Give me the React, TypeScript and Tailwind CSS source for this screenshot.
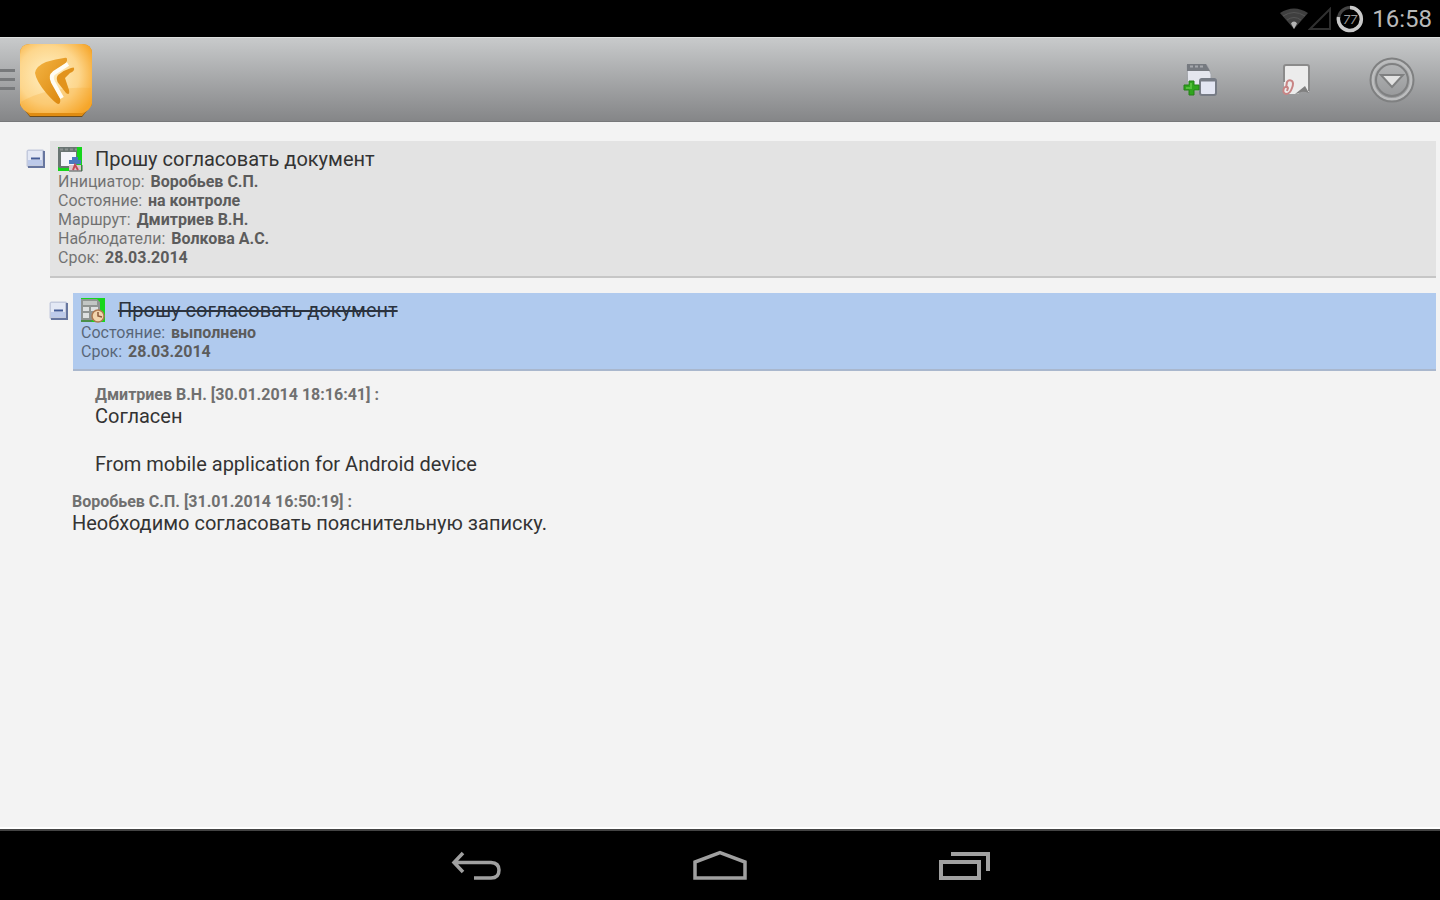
import type { ReactNode } from "react";

type Field = { label: string; value: string };

const taskFields: Field[] = [
  { label: "Инициатор", value: "Воробьев С.П." },
  { label: "Состояние", value: "на контроле" },
  { label: "Маршрут", value: "Дмитриев В.Н." },
  { label: "Наблюдатели", value: "Волкова А.С." },
  { label: "Срок", value: "28.03.2014" },
];

const subtaskFields: Field[] = [
  { label: "Состояние", value: "выполнено" },
  { label: "Срок", value: "28.03.2014" },
];

function StatusBar() {
  return (
    <div className="flex h-[37px] items-center justify-end bg-black pr-2">
      {/* Wifi */}
      <svg width="28" height="22" viewBox="0 0 28 22">
        <path d="M0 5 Q14 -4 28 5 L14 21 Z" fill="#3f3f3f" />
        <path d="M3 8 Q14 1 25 8M7 12 Q14 7 21 12" stroke="#555" strokeWidth="1" fill="none" />
        <path d="M14 13.5 Q16 13.5 17 15.5 L14 21 L11 15.5 Q12 13.5 14 13.5Z" fill="#b4b4b4" />
      </svg>
      {/* Cell signal */}
      <svg width="24" height="24" viewBox="0 0 24 24">
        <path d="M2 22 L22 2 V22 Z" fill="none" stroke="#303030" strokeWidth="2" />
      </svg>
      {/* Battery */}
      <svg className="ml-1" width="28" height="28" viewBox="0 0 28 28">
        <circle cx="14" cy="14" r="11.5" fill="none" stroke="#444" strokeWidth="3" />
        <path d="M14 2.5 A11.5 11.5 0 1 1 2.5 12" fill="none" stroke="#c9c9c9" strokeWidth="3.5" />
        <text x="14" y="19" textAnchor="middle" fontSize="13" fontStyle="italic" fill="#999">
          77
        </text>
      </svg>
      <span className="ml-2 text-2xl text-[#b9b9b9]">16:58</span>
    </div>
  );
}

function Logo() {
  return (
    <svg width="76" height="76" viewBox="0 0 76 76">
      <defs>
        <radialGradient id="tile" cx="0.4" cy="0.45" r="0.7">
          <stop offset="0" stopColor="#fff0c4" />
          <stop offset="0.6" stopColor="#fdd68c" />
          <stop offset="1" stopColor="#f6a62a" />
        </radialGradient>
        <linearGradient id="arrow" x1="0" y1="0" x2="1" y2="1">
          <stop offset="0" stopColor="#f4b545" />
          <stop offset="1" stopColor="#d98308" />
        </linearGradient>
      </defs>
      <path d="M2 62 L12 75 H64 L74 62 Z" fill="#6d4a18" />
      <path d="M12 2 H64 Q74 2 74 12 V63 L64 74 H12 L2 63 V12 Q2 2 12 2Z" fill="#e08c12" />
      <path d="M12 2 H64 Q74 2 74 12 V61 Q72 69 64 71 H12 Q4 69 2 61 V12 Q2 2 12 2Z" fill="url(#tile)" />
      <path d="M3 60 Q30 44 73 46 V62 Q72 70 63 71 H13 Q5 71 3 60Z" fill="#f9a92c" opacity="0.25" />
      <path
        d="M49 17 Q50 20 44 24 L34 31 Q31 34 34 40 L42 56 Q43 62 40 62 Q37 61 29 52 Q18 39 17 31 Q18 24 28 20 Q38 17 46 16 Q49 15 49 17Z"
        fill="url(#arrow)"
      />
      <path d="M50 22 L36 31 Q32 34 35 40 L44 56" fill="none" stroke="#fffdf5" strokeWidth="4" />
      <path
        d="M56 26 Q57 29 52 31 L47 36 L51 48 Q52 54 48 51 L41 42 Q37 37 40 33 Q46 28 53 26 Q56 25 56 26Z"
        fill="#e2931c"
      />
    </svg>
  );
}

function AddTaskIcon() {
  return (
    <svg width="36" height="36" viewBox="0 0 36 36">
      <path d="M5 3 H25 L29 12 V29 H6 Z" fill="#e4e6ee" stroke="#a2a5aa" strokeWidth="1" />
      <path d="M5 2 H24 L28 9 H5 Z" fill="#767a80" />
      <path d="M8 4.5 H23" stroke="#a5a8ad" strokeWidth="2" strokeDasharray="3 2" />
      <rect x="18" y="17" width="16" height="16" rx="2" fill="#e3e6f3" stroke="#777c86" strokeWidth="2" />
      <path d="M19 18 H33" stroke="#777c86" strokeWidth="3" />
      <path d="M7 19 H12 V23 H17 V28 H12 V33 H7 V28 H2 V23 H7 Z" fill="#2fa51d" stroke="#278018" strokeWidth="1" />
      <path d="M9 21 V26 H4" stroke="#55c03c" strokeWidth="2" fill="none" />
    </svg>
  );
}

function AttachmentIcon() {
  return (
    <svg width="36" height="36" viewBox="0 0 36 36">
      <path d="M6 4 Q6 3 7 3 H29 Q31 3 31 5 V30 L25 27 L20 32 H6 Z" fill="#ececec" />
      <path d="M6 20 V5 Q6 3 8 3 H29 Q31 3 31 5 V29" fill="none" stroke="#8b8b8b" strokeWidth="2" />
      <path d="M17 32 L27 24 L31 31 Q26 29 23 30 Q20 32 17 32Z" fill="#808080" />
      <path
        d="M8 26 L9 20 Q11 17 14 19 Q16 21 14 26 Q12 32 8 32 Q4 31 6 26 Q9 23 10 26 L9 29"
        fill="none"
        stroke="#c88484"
        strokeWidth="2"
      />
    </svg>
  );
}

function MenuIcon() {
  return (
    <svg width="46" height="46" viewBox="0 0 46 46" fill="none">
      <circle cx="23" cy="23" r="19.5" stroke="#bcbdbe" strokeWidth="3" />
      <circle cx="23" cy="23" r="21.5" stroke="#7f8081" strokeWidth="2" />
      <circle cx="23" cy="23" r="16" stroke="#7f8081" strokeWidth="2" />
      <path d="M12 18 H34 L23 30 Z" fill="#e2e2e2" stroke="#7f8081" strokeWidth="2" />
    </svg>
  );
}

function Toolbar() {
  return (
    <header className="flex h-[85px] items-center border-t border-b border-t-[#dcdede] border-b-[#77787a] bg-linear-to-b from-[#c8cacb] to-[#858688]">
      <button aria-label="Меню" className="flex h-12 w-[18px] flex-col justify-center gap-[6px]">
        <span className="h-[3px] w-[15px] bg-[#77797b]" />
        <span className="h-[3px] w-[15px] bg-[#77797b]" />
        <span className="h-[3px] w-[15px] bg-[#77797b]" />
      </button>
      <a href="#" aria-label="Главная">
        <Logo />
      </a>
      <div className="ml-auto flex items-center gap-12 pr-6">
        <button aria-label="Добавить" className="flex w-12 justify-center">
          <AddTaskIcon />
        </button>
        <button aria-label="Вложения" className="flex w-12 justify-center">
          <AttachmentIcon />
        </button>
        <button aria-label="Ещё" className="flex w-12 justify-center">
          <MenuIcon />
        </button>
      </div>
    </header>
  );
}

function Collapse() {
  return (
    <button aria-label="Свернуть" className="mt-2 shrink-0 self-start">
      <svg width="19" height="19" viewBox="0 0 19 19">
        <rect x="0.5" y="0.5" width="18" height="18" rx="2" fill="#c3cadd" />
        <path d="M2 18 H18 V2" fill="none" stroke="#67769f" strokeWidth="2" />
        <rect x="2" y="2" width="14" height="14" fill="#e3e8f5" />
        <rect x="2" y="11" width="14" height="5" fill="#bdcaea" />
        <path d="M5 9.5 H14" stroke="#455c96" strokeWidth="2" />
      </svg>
    </button>
  );
}

function ControlIcon() {
  return (
    <svg width="26" height="26" viewBox="0 0 26 26">
      <rect x="1" y="1" width="24" height="24" fill="#15d51b" />
      <path d="M1 3 Q1 1 3 1 H20 V22 H3 Q1 22 1 20Z" fill="#6a7573" />
      <path d="M3 3.5 H20" stroke="#8b9291" strokeWidth="2" strokeDasharray="3 2" />
      <rect x="4" y="6" width="15" height="14" fill="#f4f5fa" />
      <path d="M12 14 H15 V11 H21 V14 H24 V18 H12Z" fill="#4a79bd" />
      <path d="M12 25 V19 H24 V25Z" fill="#dcc6cb" />
      <path d="M16 24 L18 19 L21 24" fill="none" stroke="#c44b55" strokeWidth="2" />
      <path d="M12 25 H25 V19" fill="none" stroke="#4c5654" strokeWidth="1" />
    </svg>
  );
}

function DoneIcon() {
  return (
    <svg width="26" height="26" viewBox="0 0 26 26">
      <rect x="1" y="1" width="24" height="24" fill="#16d71c" />
      <path d="M1 2 H17 L20 5 V23 H1Z" fill="#8f9492" />
      <path d="M3 4 H17 V8 H3Z" fill="#c2c6c4" />
      <path d="M3 10 H9 V14 H3ZM11 10 H18 V14 H11ZM3 16 H9 V21 H3Z" fill="#dde0e0" />
      <path d="M1 24 H12" stroke="#4b8f48" strokeWidth="2" />
      <circle cx="18" cy="19" r="6" fill="#f2d4ad" stroke="#ad7951" strokeWidth="1.5" />
      <path d="M18 15 V19 L22 20" fill="none" stroke="#8c5a3c" strokeWidth="1.5" />
    </svg>
  );
}

function Fields({ items }: { items: Field[] }) {
  return (
    <dl className="pl-2 text-base leading-[19px]">
      {items.map((f) => (
        <div key={f.label} className="flex gap-[6px]">
          <dt className="opacity-50">{f.label}:</dt>
          <dd className="font-bold text-[#5c5c5c]">{f.value}</dd>
        </div>
      ))}
    </dl>
  );
}

function Comment({ author, children }: { author: string; children: ReactNode }) {
  return (
    <article className="mb-4">
      <h3 className="text-base leading-[19px] font-bold text-[#707070]">{author}</h3>
      <div className="text-xl leading-6 whitespace-pre-line text-[#333]">{children}</div>
    </article>
  );
}

function NavBar() {
  return (
    <nav className="flex h-[71px] items-center justify-center gap-[188px] border-t-2 border-[#444] bg-black">
      <button aria-label="Назад">
        <svg width="56" height="36" viewBox="0 0 56 36" fill="none" stroke="#a0a0a0" strokeWidth="3.5">
          <path d="M15 5 L6 14.5 L15 24M6 14.5 H43 Q51 15 51 22 Q51 30 43 30 H26" />
        </svg>
      </button>
      <button aria-label="Домой">
        <svg width="56" height="36" viewBox="0 0 56 36" fill="none" stroke="#a0a0a0" strokeWidth="3.5">
          <path d="M3 30 V14 L28 4.5 L53 14 V30 Z" />
        </svg>
      </button>
      <button aria-label="Недавние">
        <svg width="56" height="36" viewBox="0 0 56 36" fill="none" stroke="#a0a0a0" strokeWidth="4">
          <path d="M5 14 H43 V30 H5 Z M15 6 H52 V23" />
        </svg>
      </button>
    </nav>
  );
}

export default function App() {
  return (
    <div className="flex min-h-screen flex-col bg-[#f3f3f3] font-[Roboto,sans-serif]">
      <StatusBar />
      <Toolbar />
      <main className="grow border-b-2 border-white pt-[19px] pr-1 pl-[26px]">
        {/* Task */}
        <section className="flex gap-[5px]">
          <Collapse />
          <div className="grow border-b-2 border-[#c6c6c6] bg-[#e3e3e3] pt-[5px] pb-[9px]">
            <div className="flex items-center pl-[7px]">
              <ControlIcon />
              <h2 className="ml-3 text-xl leading-6 text-[#333]">Прошу согласовать документ</h2>
            </div>
            <Fields items={taskFields} />
          </div>
        </section>

        {/* Subtask */}
        <section className="mt-[15px] ml-[23px] flex gap-[5px]">
          <Collapse />
          <div className="grow border-b-2 border-[#a9b7cd] bg-[#b0caee] pt-1 pb-2">
            <div className="flex items-center pl-[7px]">
              <DoneIcon />
              <h2 className="ml-3 text-xl leading-6 text-[#2b333f] line-through">Прошу согласовать документ</h2>
            </div>
            <Fields items={subtaskFields} />
          </div>
        </section>

        {/* Comments */}
        <div className="mt-[14px] ml-[46px]">
          <div className="ml-[23px]">
            <Comment author="Дмитриев В.Н. [30.01.2014 18:16:41] :">
              {"Согласен\n\nFrom mobile application for Android device"}
            </Comment>
          </div>
          <Comment author="Воробьев С.П. [31.01.2014 16:50:19] :">
            Необходимо согласовать пояснительную записку.
          </Comment>
        </div>
      </main>
      <NavBar />
    </div>
  );
}
